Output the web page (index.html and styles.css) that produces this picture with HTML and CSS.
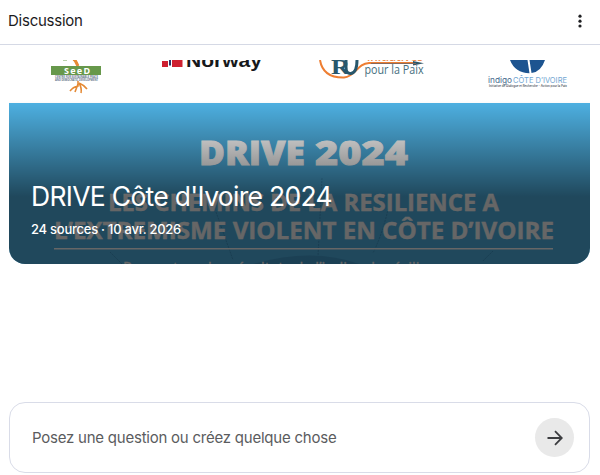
FILE: index.html
```
<!DOCTYPE html>
<html lang="fr">
<head>
<meta charset="utf-8">
<title>Discussion</title>
<link rel="stylesheet" href="styles.css">
</head>
<body>
<div class="panel">
  <header class="header">
    <h1 class="heading">Discussion</h1>
    <svg class="more" viewBox="0 0 6 16"><circle cx="3" cy="3.200" r="1.6"/><circle cx="3" cy="8.200" r="1.6"/><circle cx="3" cy="13" r="1.6"/></svg>
  </header>
  <main class="content">
    <section class="cover">
      <svg class="art" viewBox="9 60 581 204">
        <rect x="9" y="60" width="581" height="43" fill="#fff"/>
        <rect x="9" y="103" width="581" height="161" fill="#4fb3e5"/>
        <g fill="none" stroke="#e58a35" stroke-width="1.6">
          <path d="M78 81v5q-5 1-8 5M78 84l-3 8M79 83q5 2 8 6M79 83q3 5 2 10" />
          <path d="M73 60q4 1 5 6" />
          <path d="M75 60l3 6" stroke-width="3"/>
        </g>
        <path d="M63 60h4" stroke="#76a65a"/>
        <rect x="51" y="66" width="50" height="9" fill="#67984b"/>
        <text class="seed" x="64" y="74" textLength="26">SeeD</text>
        <rect x="52" y="75" width="49" height="6" fill="#fff"/>
        <text class="seed-sub" x="55" y="77.800" textLength="43" lengthAdjust="spacingAndGlyphs">CENTRE FOR SUSTAINABLE PEACE</text>
        <text class="seed-sub" x="55" y="80.800" textLength="43" lengthAdjust="spacingAndGlyphs">AND DEMOCRATIC DEVELOPMENT</text>
        <path fill="#ce2030" d="M162 61h6v6h-6zM172 60h10.500v7H172z"/>
        <path fill="#28366b" d="M169 60h2v5.500h-2z"/>
        <text class="norway" x="186" y="66.500" textLength="76" lengthAdjust="spacingAndGlyphs">Norway</text>
        <path d="M320 60q3 18 24 17.500c12-1 13-14 25-14.500h47" fill="none" stroke="#ee7e32" stroke-width="2"/>
        <path fill="#30586a" d="M413 61l11 2.300-11 2.300z"/>
        <path d="M371 63.500h45" stroke="#87695c"/>
        <text class="ru" x="331" y="74" textLength="19" lengthAdjust="spacingAndGlyphs">R</text>
        <path d="M346 60v7q0 7 5 6.500 6-1 6-13.500" fill="none" stroke="#28576c" stroke-width="3"/>
        <text class="init" x="367" y="61" textLength="56" lengthAdjust="spacingAndGlyphs">initiatives</text>
        <text class="paix" x="364.500" y="74" textLength="59" lengthAdjust="spacingAndGlyphs">pour la Paix</text>
        <path fill="#1d5490" d="M510 60h17.500l2 13.300Q515 73 510 60zM529.500 60H545q-4 12-13.500 13z"/>
        <text class="indigo" x="488" y="83" textLength="24" lengthAdjust="spacingAndGlyphs">indigo</text>
        <text class="ivoire" x="513" y="83" textLength="54" lengthAdjust="spacingAndGlyphs">CÔTE D’IVOIRE</text>
        <text class="tiny" x="489" y="87" textLength="78" lengthAdjust="spacingAndGlyphs">Initiative de Dialogue et Recherche - Action pour la Paix</text>
        <path d="M253 264q60-17 106 0z" fill="#449fd2"/>
        <g fill="none" stroke="#4099ca" stroke-width="1" stroke-dasharray="2 1"><path d="M216 212l17 48M389 205q-6 28-16 48M322 178l-4 78M493 251l-10 10M110 252l12 12"/></g>
        <g class="poster">
          <text class="drive" x="199" y="165" textLength="106" lengthAdjust="spacingAndGlyphs">DRIVE</text>
          <text class="drive" x="315" y="165" textLength="93" lengthAdjust="spacingAndGlyphs">2024</text>
          <text class="line" x="108" y="211" textLength="391" lengthAdjust="spacingAndGlyphs">LES CHEMINS DE LA RESILIENCE A</text>
          <text class="line" x="54" y="239" textLength="500" lengthAdjust="spacingAndGlyphs">L’EXTREMISME VIOLENT EN CÔTE D’IVOIRE</text>
          <rect x="54" y="248" width="499" height="1.500"/>
          <text class="small" x="123" y="274" textLength="329" lengthAdjust="spacingAndGlyphs">Rapport sur les résultats de l’indice de résilience</text>
        </g>
      </svg>
      <div class="caption">
        <h2 class="title">DRIVE Côte d'Ivoire 2024</h2>
        <p class="meta">24 sources · 10 avr. 2026</p>
      </div>
    </section>
    <div class="composer">
      <span class="placeholder">Posez une question ou créez quelque chose</span>
      <div class="send"><svg class="arrow" viewBox="0 0 16 16"><path d="M0.500 8H14.500M8 1.200L14.800 8L8 14.800"/></svg></div>
    </div>
  </main>
</div>
</body>
</html>
```
FILE: styles.css
```
* { box-sizing: border-box; }
body { margin: 0; background: #fff; font-family: Inter, "Liberation Sans", sans-serif; }
h1, h2, p { margin: 0; font-weight: 400; white-space: nowrap; }
.panel { height: 475px; display: flex; flex-direction: column; overflow: hidden; }
.header { height: 45px; flex: none; display: flex; align-items: center; justify-content: space-between; padding: 0 17px 2px 8px; border-bottom: 1px solid #d5d9e5; }
.heading { font-size: 15px; line-height: 20px; letter-spacing: -0.25px; color: #1b1b1d; }
.more { width: 6px; height: 16px; fill: #202124; }
.content { flex: 1; display: flex; flex-direction: column; justify-content: space-between; padding: 15px 10px 2px 9px; }
.cover { height: 204px; display: grid; border-radius: 0 0 16px 16px; overflow: hidden; }
.art, .caption { grid-area: 1 / 1; }
.art { width: 581px; height: 204px; display: block; }
.caption { z-index: 1; padding: 118px 22px 0; color: #fff; background: linear-gradient(transparent 40px, rgba(0, 0, 0, 0.6) 137px); }
.title { font-size: 26.500px; line-height: 36px; letter-spacing: -0.7px; }
.meta { margin-top: 5px; font-size: 13px; line-height: 20px; font-weight: 500; letter-spacing: -0.25px; }
.composer { height: 71px; display: flex; align-items: center; justify-content: space-between; padding: 0 15px 0 22px; border: 1px solid #d9dce8; border-radius: 16px; }
.placeholder { font-size: 15px; line-height: 20px; letter-spacing: -0.23px; color: #5b5c5e; white-space: nowrap; }
.send { width: 39px; height: 39px; border-radius: 50%; background: #e9e9e9; display: grid; place-items: center; }
.arrow { width: 16px; height: 16px; fill: none; stroke: #3c3d40; stroke-width: 1.800; }
.seed { font: 700 9px "Noto Sans", sans-serif; fill: #fff; }
.seed-sub { font: 700 2.800px "Noto Sans", sans-serif; fill: #65758a; }
.norway { font: 700 19px "Liberation Sans", sans-serif; fill: #17191b; }
.ru { font: 700 22px "Liberation Serif", serif; fill: #28576c; }
.init { font: 600 13px "Open Sans", sans-serif; fill: #ee8b4b; }
.paix { font: 400 13px "Open Sans", sans-serif; fill: #477080; }
.indigo { font: 400 8px Inter, sans-serif; fill: #46698d; }
.ivoire { font: 400 7.500px Inter, sans-serif; fill: #72a6d2; }
.tiny { font: 600 3px Inter, sans-serif; fill: #50565f; }
.poster { fill: #fff; }
.drive { font: 800 34px "Open Sans", sans-serif; stroke: #fff; stroke-width: 0.800; }
.line { font: 700 24px "Open Sans", sans-serif; stroke: #fff; stroke-width: 0.400; }
.small { font: 400 17px "Open Sans", sans-serif; stroke: #fff; stroke-width: 0.300; }
```
